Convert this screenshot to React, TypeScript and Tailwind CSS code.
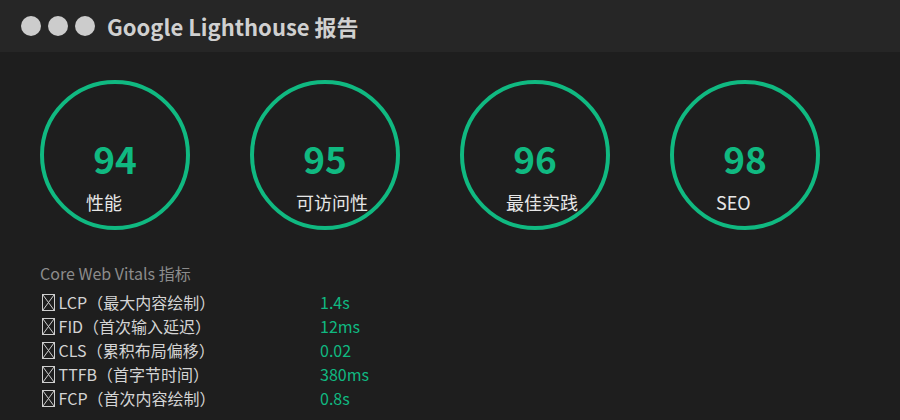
const scores = [
  { value: 94, label: "性能" },
  { value: 95, label: "可访问性" },
  { value: 96, label: "最佳实践" },
  { value: 98, label: "SEO" },
];

const metrics = [
  { name: "LCP（最大内容绘制）", value: "1.4s" },
  { name: "FID（首次输入延迟）", value: "12ms" },
  { name: "CLS（累积布局偏移）", value: "0.02" },
  { name: "TTFB（首字节时间）", value: "380ms" },
  { name: "FCP（首次内容绘制）", value: "0.8s" },
];

const Tofu = () => (
  <svg width="13" height="17" viewBox="0 0 13 17" className="inline-block align-[-2px]">
    <rect x="0.5" y="0.5" width="12" height="16" fill="none" stroke="#cfcfcf" strokeWidth={1} />
    <path d="M1 1l11 15M12 1L1 16" stroke="#cfcfcf" strokeWidth={1} />
  </svg>
);

export default function App() {
  return (
    <div
      className="w-[900px] h-[420px] bg-[#1e1e1e] overflow-hidden"
      style={{ fontFamily: '"Noto Sans CJK SC", "Noto Sans", sans-serif' }}
    >
      {/* Title bar */}
      <div className="h-[52px] bg-[#262626] flex items-center px-[21px]">
        <div className="flex gap-[7px]">
          <span className="w-5 h-5 rounded-full bg-[#cccccc]" />
          <span className="w-5 h-5 rounded-full bg-[#cccccc]" />
          <span className="w-5 h-5 rounded-full bg-[#cccccc]" />
        </div>
        <h1 className="ml-3 text-[22px] font-bold text-[#d0d0d0] leading-none">
          Google Lighthouse 报告
        </h1>
      </div>

      <div className="pl-10 pt-7">
        {/* Score circles */}
        <div className="flex gap-[60px]">
          {scores.map((s) => (
            <div
              key={s.label}
              className="w-[150px] h-[150px] rounded-full border-4 border-[#10b981] flex flex-col pt-[52px]"
            >
              <div className="text-center text-[37px] font-bold text-[#10b981] leading-[44px]">
                {s.value}
              </div>
              <div className="ml-[42px] mt-[10px] text-[18px] text-[#e6e6e6] leading-6">
                {s.label}
              </div>
            </div>
          ))}
        </div>

        {/* Core Web Vitals */}
        <div className="mt-[31px]">
          <div className="text-[16px] text-[#8c8c8c] leading-6">Core Web Vitals 指标</div>
          <div className="mt-[5px]">
            {metrics.map((m) => (
              <div key={m.name} className="flex text-[16px] leading-6">
                <div className="w-[280px] text-[#d4d4d4] pl-[2px]">
                  <Tofu /> {m.name}
                </div>
                <div className="text-[#10b981]">{m.value}</div>
              </div>
            ))}
          </div>
        </div>
      </div>
    </div>
  );
}
